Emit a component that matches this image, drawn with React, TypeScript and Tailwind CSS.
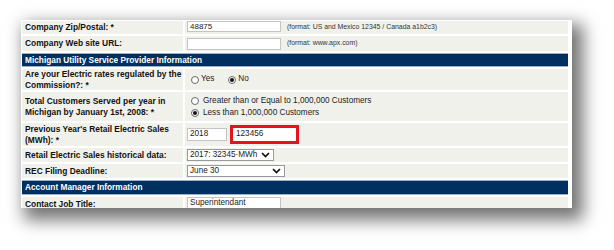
import React from "react";

const font = { fontFamily: '"Liberation Sans", Arial, sans-serif' };

function Chevron() {
  return (
    <svg width="9" height="6" viewBox="0 0 9 6" className="shrink-0">
      <path d="M1 1 L4.5 4.5 L8 1" fill="none" stroke="#111" strokeWidth="1.7" />
    </svg>
  );
}

function Radio({ checked }: { checked?: boolean }) {
  return (
    <span className="flex h-[8px] w-[8px] shrink-0 items-center justify-center rounded-full border border-[#6a6a6a] bg-white">
      {checked && <span className="h-[4px] w-[4px] rounded-full bg-[#111]" />}
    </span>
  );
}

function Label({ children, h }: { children: React.ReactNode; h: string }) {
  return (
    <div
      className={`flex items-center bg-[#f1f1ec] pl-[3px] text-[8.4px] font-bold leading-[10.5px] text-[#111] ${h}`}
    >
      <div className="whitespace-nowrap">{children}</div>
    </div>
  );
}

function Header({ children, h }: { children: React.ReactNode; h: string }) {
  return (
    <div
      className={`col-span-2 flex items-center border-y border-[#9fb1c8] bg-[#00305f] pl-[3px] text-[8.3px] font-bold text-white ${h}`}
    >
      {children}
    </div>
  );
}

export default function App() {
  return (
    <div className="h-[250px] w-[614px] overflow-hidden bg-white pl-[21px] pt-[20px]" style={font}>
      <div className="h-[188px] w-[551px] overflow-hidden bg-white pl-[1px] pr-[4px] pt-[1px] shadow-[7px_8px_16px_4px_rgba(0,0,0,0.55)]">
        <div className="grid grid-cols-[161px_1fr] gap-x-[2px] gap-y-[2px]">
          {/* Row 1 */}
          <Label h="h-[13px]">Company Zip/Postal: *</Label>
          <div className="flex h-[13px] items-start bg-[#f1f1ec] pl-[2px]">
            <div className="flex h-[11px] w-[94px] items-center border border-[#c4c4c4] bg-white pl-[2px] text-[8px] text-[#222]">
              48875
            </div>
            <span className="ml-[6px] mt-[1px] text-[6.9px] leading-[10px] text-[#333]">
              (format: US and Mexico 12345 / Canada a1b2c3)
            </span>
          </div>

          {/* Row 2 */}
          <Label h="h-[15px]">Company Web site URL:</Label>
          <div className="flex h-[15px] items-center bg-[#f1f1ec] pl-[2px]">
            <div className="h-[12px] w-[94px] border border-[#c4c4c4] bg-white" />
            <span className="ml-[6px] text-[6.9px] text-[#333]">(format: www.apx.com)</span>
          </div>

          {/* Header 1 */}
          <Header h="h-[14px]">Michigan Utility Service Provider Information</Header>

          {/* Row 4 */}
          <Label h="h-[21px]">
            Are your Electric rates regulated by the
            <br />
            Commission?: *
          </Label>
          <div className="flex h-[21px] items-center bg-[#f1f1ec] pl-[6px] text-[8.2px] text-[#222]">
            <Radio />
            <span className="ml-[2px]">Yes</span>
            <span className="ml-[14px]">
              <Radio checked />
            </span>
            <span className="ml-[2px]">No</span>
          </div>

          {/* Row 5 */}
          <Label h="h-[29px]">
            Total Customers Served per year in
            <br />
            Michigan by January 1st, 2008: *
          </Label>
          <div className="flex h-[29px] flex-col justify-center gap-[3px] bg-[#f1f1ec] pl-[6px] text-[8.2px] leading-[9px] text-[#222]">
            <div className="flex items-center">
              <Radio />
              <span className="ml-[4px]">Greater than or Equal to 1,000,000 Customers</span>
            </div>
            <div className="flex items-center">
              <Radio checked />
              <span className="ml-[4px]">Less than 1,000,000 Customers</span>
            </div>
          </div>

          {/* Row 6 */}
          <Label h="h-[23px]">
            Previous Year's Retail Electric Sales
            <br />
            (MWh): *
          </Label>
          <div className="flex h-[23px] items-center bg-[#f1f1ec] pl-[2px] text-[8.2px] text-[#222]">
            <div className="flex h-[13px] w-[40px] items-center border border-[#c4c4c4] bg-white pl-[2px]">
              2018
            </div>
            <div className="ml-[3px] flex h-[19px] w-[69px] items-center border-[3px] border-[#e3141f] bg-white pl-[3px]">
              123456
            </div>
          </div>

          {/* Row 7 */}
          <Label h="h-[14px]">Retail Electric Sales historical data:</Label>
          <div className="flex h-[14px] items-center bg-[#f1f1ec] pl-[2px] text-[8.2px] text-[#222]">
            <div className="flex h-[12px] w-[87px] items-center justify-between border border-[#9a9a9a] bg-white pl-[2px] pr-[3px]">
              <span>2017: 32345·MWh</span>
              <Chevron />
            </div>
          </div>

          {/* Row 8 */}
          <Label h="h-[14px]">REC Filing Deadline:</Label>
          <div className="flex h-[14px] items-center bg-[#f1f1ec] pl-[2px] text-[8.2px] text-[#222]">
            <div className="flex h-[12px] w-[98px] items-center justify-between border border-[#9a9a9a] bg-white pl-[2px] pr-[3px]">
              <span>June 30</span>
              <Chevron />
            </div>
          </div>

          {/* Header 2 */}
          <Header h="h-[15px]">Account Manager Information</Header>

          {/* Row 10 */}
          <Label h="h-[14px]">Contact Job Title:</Label>
          <div className="flex h-[14px] items-start bg-[#f1f1ec] pl-[2px] text-[8.2px] text-[#222]">
            <div className="flex h-[13px] w-[94px] items-center border border-[#c4c4c4] bg-white pl-[2px]">
              Superintendant
            </div>
          </div>
        </div>
      </div>
    </div>
  );
}
